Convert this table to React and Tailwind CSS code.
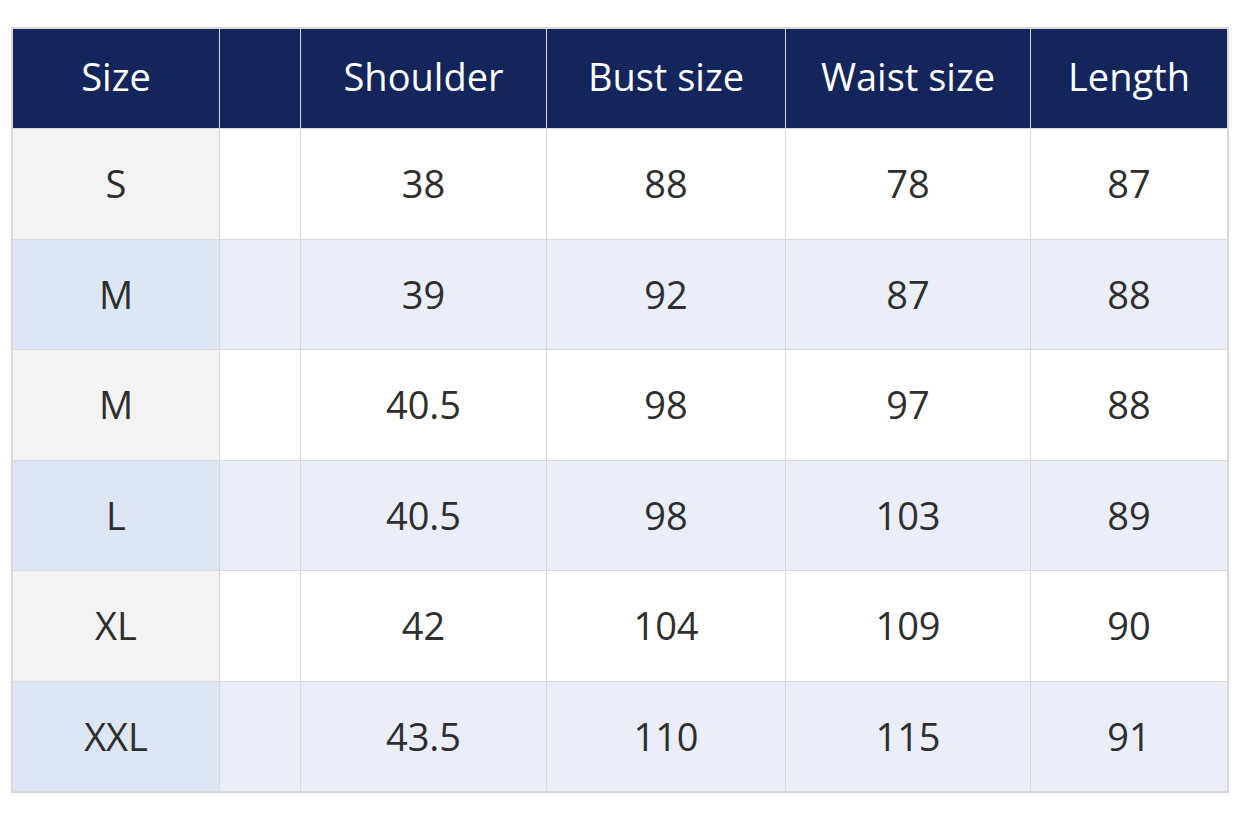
export default function App() {
    const headers = ['Size', '', 'Shoulder', 'Bust size', 'Waist size', 'Length']
    const rows = [
        ['S', '', '38', '88', '78', '87'],
        ['M', '', '39', '92', '87', '88'],
        ['M', '', '40.5', '98', '97', '88'],
        ['L', '', '40.5', '98', '103', '89'],
        ['XL', '', '42', '104', '109', '90'],
        ['XXL', '', '43.5', '110', '115', '91'],
    ]

    return (
        <div className="w-[1248px] h-[832px] bg-white pt-[27px] pl-[11px]" style={{ fontFamily: '"Open Sans", sans-serif' }}>
            <div className="w-[1218px] grid grid-cols-[206px_80px_245px_238px_244px_196px] grid-rows-[99px_repeat(6,109.5px)] gap-px p-[2px] bg-[#d9d9d9] shadow-[0_2px_4px_rgba(0,0,0,0.06)]">
                {headers.map((h, i) => (
                    <div key={'h' + i} className="bg-[#13255a] text-white flex items-center justify-center pb-[5px] text-[38px]">
                        {h}
                    </div>
                ))}
                {rows.map((row, r) => {
                    const blue = r % 2 === 1
                    return row.map((cell, c) => {
                        let bg = blue ? 'bg-[#e9eef8]' : 'bg-white'
                        if (c === 0) bg = blue ? 'bg-[#dde6f4]' : 'bg-[#f3f3f3]'
                        return (
                            <div key={r + '-' + c} className={`${bg} text-[#2e2e2e] flex items-center justify-center text-[38px]`}>
                                {cell}
                            </div>
                        )
                    })
                })}
            </div>
        </div>
    )
}
